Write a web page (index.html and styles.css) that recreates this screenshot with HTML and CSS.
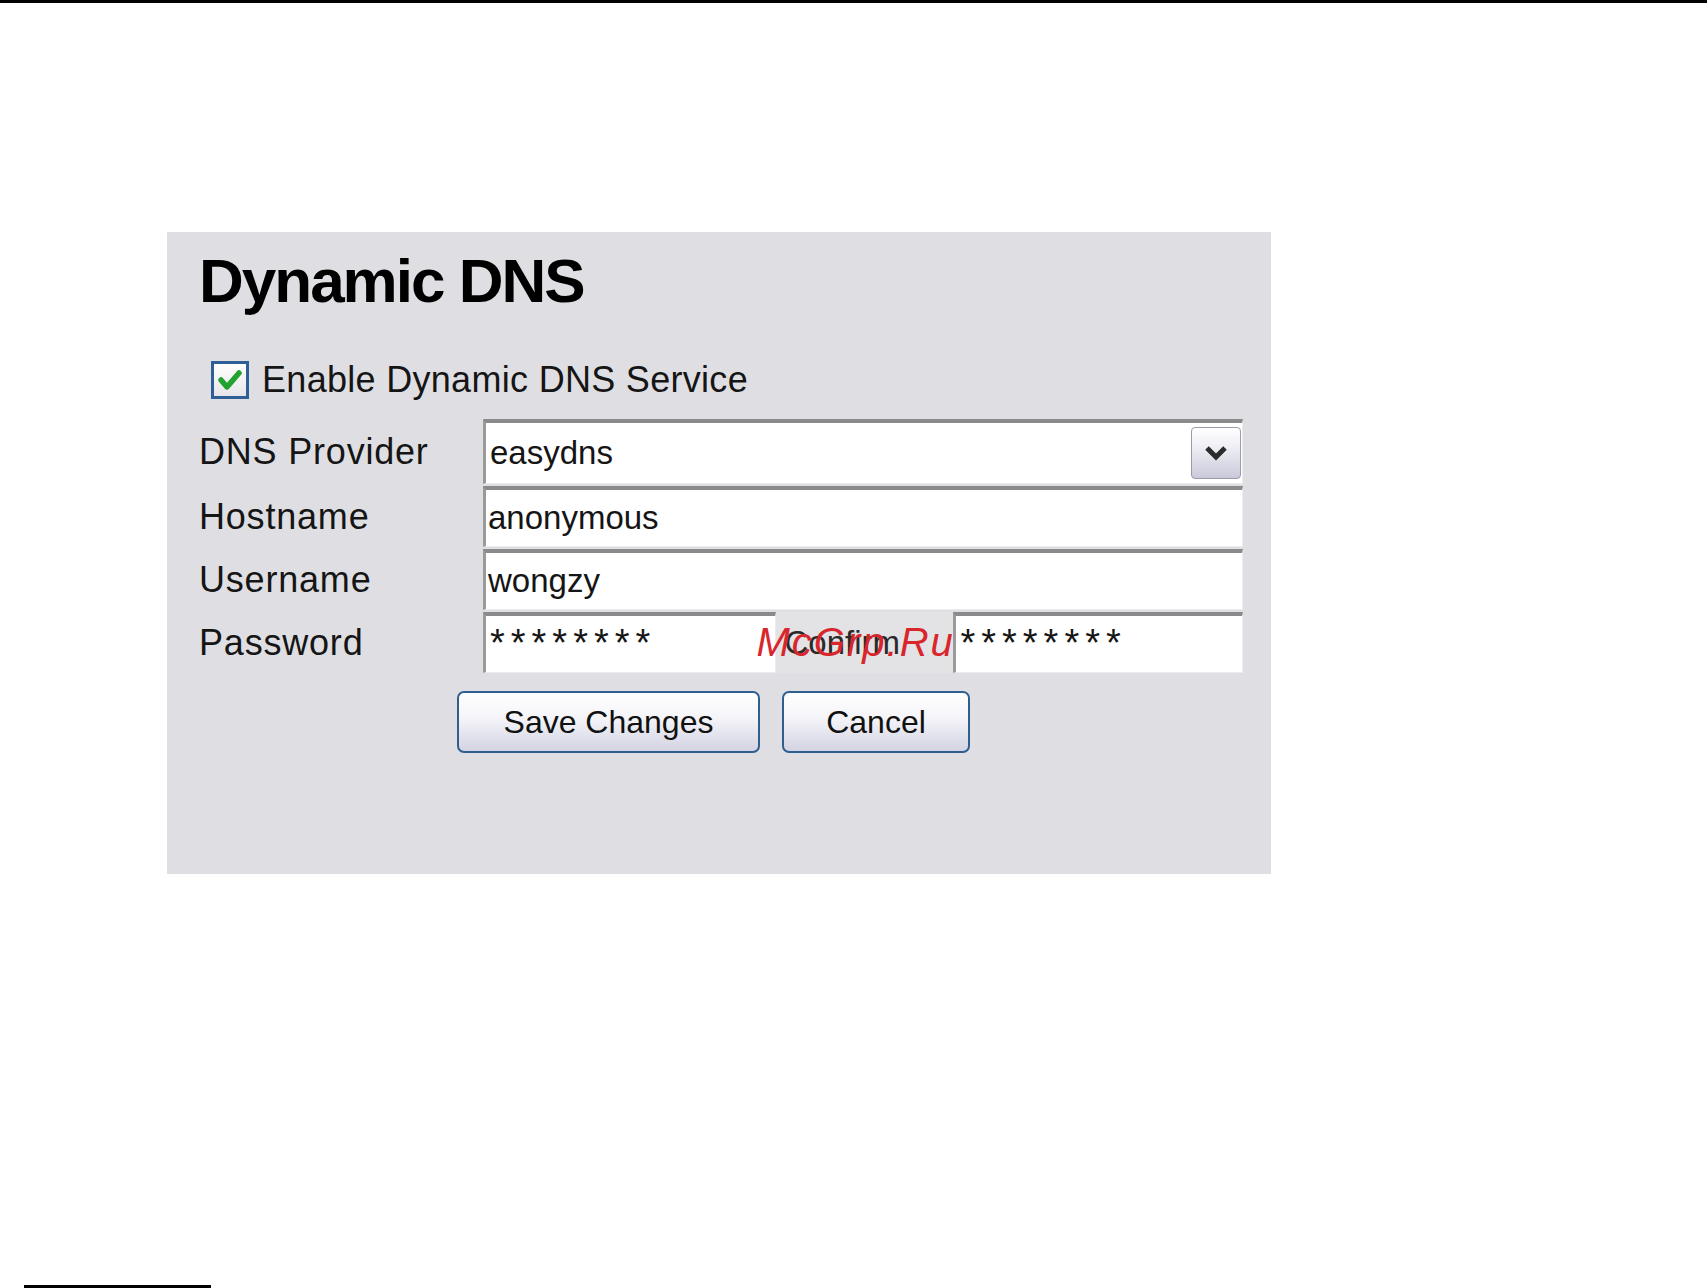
FILE: index.html
```html
<!DOCTYPE html>
<html lang="en">
<head>
    <meta charset="UTF-8">
    <title>Dynamic DNS</title>
    <link rel="stylesheet" href="styles.css">
</head>
<body>
    <div class="topline"></div>

    <div class="panel">
        <h1>Dynamic DNS</h1>

        <div class="enable">
            <span class="check">
                <svg width="32" height="32" viewBox="0 0 32 32">
                    <path d="M7 16 L13 23 L25 9" fill="none" stroke="#22a22e" stroke-width="5.5" stroke-linecap="round" stroke-linejoin="round"/>
                </svg>
            </span>
            <span>Enable Dynamic DNS Service</span>
        </div>

        <div class="form">
            <div class="label">DNS Provider</div>
            <div class="field select">
                <span>easydns</span>
                <span class="drop">
                    <svg width="26" height="18" viewBox="0 0 26 18">
                        <path d="M4 4 L13 13 L22 4" fill="none" stroke="#2b2b2b" stroke-width="5"/>
                    </svg>
                </span>
            </div>

            <div class="label">Hostname</div>
            <div class="field">anonymous</div>

            <div class="label">Username</div>
            <div class="field">wongzy</div>

            <div class="label">Password</div>
            <div class="pwrow">
                <div class="field pw stars">********</div>
                <div class="confirm">Confirm<span class="watermark">McGrp.Ru</span></div>
                <div class="field pw2 stars">********</div>
            </div>
        </div>

        <div class="buttons">
            <button class="btn save">Save Changes</button>
            <button class="btn">Cancel</button>
        </div>
    </div>

    <div class="footline"></div>
</body>
</html>
```

FILE: styles.css
```css
body {
    margin: 0;
    padding: 0;
    background-color: #fff;
    font-family: "Liberation Sans", Arial, sans-serif;
    color: #151515;
    overflow: hidden;
}
.topline {
    height: 3px;
    background-color: #000;
}
.panel {
    box-sizing: border-box;
    margin: 229px 0 0 167px;
    width: 1104px;
    height: 642px;
    padding: 18px 0 0 32px;
    background-color: #dfdfe3;
}
.panel h1 {
    margin: 0;
    font-size: 62px;
    line-height: 62px;
    letter-spacing: -2px;
    font-weight: bold;
    color: #000;
}
.enable {
    display: flex;
    align-items: center;
    height: 40px;
    margin-top: 48px;
    font-size: 36px;
    letter-spacing: 0.3px;
}
.check {
    box-sizing: border-box;
    width: 38px;
    height: 38px;
    margin: 0 13px 0 12px;
    border: 3px solid #2f5f97;
    background: linear-gradient(#ffffff, #e6e6ea);
    display: flex;
    align-items: center;
    justify-content: center;
}
.form {
    display: grid;
    grid-template-columns: 284px 760px;
    grid-template-rows: 65px 61px 61px 61px;
    row-gap: 2px;
    margin-top: 19px;
}
.label {
    font-size: 36px;
    letter-spacing: 0.8px;
    display: flex;
    align-items: center;
}
.field {
    box-sizing: border-box;
    height: 100%;
    display: flex;
    align-items: center;
    padding-left: 2px;
    font-size: 33px;
    background-color: #fff;
    border-top: 4px solid #8a8a8a;
    border-left: 3px solid #9a9a9a;
    border-right: 1px solid #ececee;
    border-bottom: 1px solid #ececee;
}
.select {
    justify-content: space-between;
    padding-left: 4px;
    padding-right: 1px;
}
.drop {
    box-sizing: border-box;
    width: 50px;
    height: 52px;
    border: 1px solid #9b9bab;
    border-radius: 4px;
    background: linear-gradient(#ffffff, #f0f0f6 35%, #c9c9da);
    display: flex;
    align-items: center;
    justify-content: center;
}
.pwrow {
    display: flex;
    height: 100%;
}
.pw {
    width: 296px;
}
.pw2 {
    width: 293px;
}
.stars {
    align-items: flex-start;
    padding: 6px 0 0 4px;
    font-size: 38px;
    letter-spacing: 6px;
}
.confirm {
    position: relative;
    width: 171px;
    display: flex;
    align-items: center;
    padding-left: 9px;
    font-size: 33px;
    color: #2a2a2a;
    background-color: #e3e3e6;
}
.watermark {
    position: absolute;
    left: -19px;
    top: 8px;
    font-size: 40px;
    font-style: italic;
    letter-spacing: 2px;
    color: #d8262c;
}
.buttons {
    display: flex;
    gap: 22px;
    margin: 18px 0 0 258px;
}
.btn {
    box-sizing: border-box;
    height: 62px;
    width: 188px;
    padding: 0;
    font-family: "Liberation Sans", Arial, sans-serif;
    font-size: 32px;
    color: #111;
    border: 2px solid #2f5f8f;
    border-radius: 7px;
    background: linear-gradient(#ffffff, #f6f6fa 40%, #d3d3e3);
}
.save {
    width: 303px;
}
.footline {
    margin: 411px 0 0 24px;
    width: 187px;
    height: 3px;
    background-color: #000;
}
```
